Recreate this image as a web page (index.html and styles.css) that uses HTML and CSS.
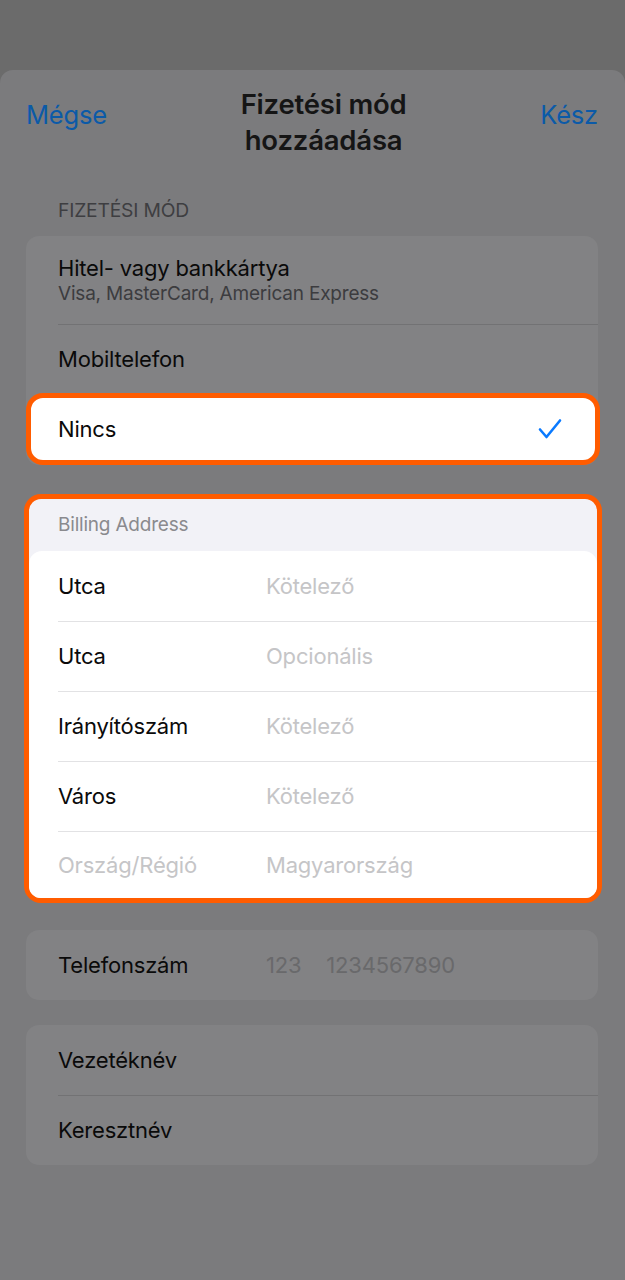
FILE: index.html
```html
<!DOCTYPE html>
<html lang="hu">
<head>
    <meta charset="utf-8">
    <title>Fizetési mód hozzáadása</title>
    <link rel="stylesheet" href="styles.css">
</head>

<body>

    <!-- modal sheet -->
    <div class="sheet">

        <div class="nav">
            <span class="nav-btn">Mégse</span>
            <h1 class="nav-title">Fizetési mód<br>hozzáadása</h1>
            <span class="nav-btn">Kész</span>
        </div>

        <!-- payment method -->
        <p class="section-label">FIZETÉSI MÓD</p>
        <div class="group">
            <div class="row row-tall">
                <span class="row-title">Hitel- vagy bankkártya</span>
                <span class="row-sub">Visa, MasterCard, American Express</span>
            </div>
            <div class="row">
                <span class="label">Mobiltelefon</span>
            </div>
            <div class="row highlight selected">
                <span class="label">Nincs</span>
                <svg class="check" width="24" height="22" viewBox="0 0 24 22">
                    <path d="M2 11.5 L8.5 19 L22 2.5" fill="none" stroke="#0a7aff" stroke-width="2.6" stroke-linecap="round" stroke-linejoin="round"/>
                </svg>
            </div>
        </div>

        <!-- billing address -->
        <div class="billing highlight">
            <p class="billing-label">Billing Address</p>
            <div class="billing-card">
                <div class="row">
                    <span class="label">Utca</span>
                    <span class="value">Kötelező</span>
                </div>
                <div class="row">
                    <span class="label">Utca</span>
                    <span class="value">Opcionális</span>
                </div>
                <div class="row">
                    <span class="label">Irányítószám</span>
                    <span class="value">Kötelező</span>
                </div>
                <div class="row">
                    <span class="label">Város</span>
                    <span class="value">Kötelező</span>
                </div>
                <div class="row row-last">
                    <span class="label muted">Ország/Régió</span>
                    <span class="value">Magyarország</span>
                </div>
            </div>
        </div>

        <!-- phone -->
        <div class="group">
            <div class="row">
                <span class="label">Telefonszám</span>
                <span class="value"><span class="code">123</span>1234567890</span>
            </div>
        </div>

        <!-- name -->
        <div class="group">
            <div class="row">
                <span class="label">Vezetéknév</span>
            </div>
            <div class="row">
                <span class="label">Keresztnév</span>
            </div>
        </div>

    </div>

</body>
</html>
```

FILE: styles.css
```css
* {
    margin: 0;
    padding: 0;
    box-sizing: border-box;
}

body {
    background: #6b6b6b;
    font-family: Inter, "Liberation Sans", sans-serif;
    color: #0a0a0a;
    letter-spacing: -0.2px;
}

        /* Sheet */

.sheet {
    margin-top: 70px;
    min-height: 1210px;
    background: #7b7b7d;
    border-radius: 13px 13px 0 0;
    padding: 0 27px 40px 26px;
}

.nav {
    display: flex;
    justify-content: space-between;
    align-items: flex-start;
    height: 126px;
}

.nav-btn {
    font-size: 25.5px;
    line-height: 30px;
    padding-top: 30px;
    color: #0b5aa8;
}

.nav-title {
    font-size: 27.5px;
    font-weight: 600;
    line-height: 36px;
    padding-top: 16px;
    text-align: center;
    color: #151515;
}

.section-label {
    font-size: 19.3px;
    color: #3e3e41;
    padding: 0 0 12px 32px;
    line-height: 28px;
}

        /* Groups */

.group {
    background: #828284;
    border-radius: 13px;
    margin-bottom: 25px;
}

.row {
    display: flex;
    align-items: center;
    height: 70px;
    padding: 0 0 0 32px;
    position: relative;
    font-size: 22px;
}

.row + .row::before {
    content: '';
    position: absolute;
    top: 0;
    left: 32px;
    right: 0;
    height: 1px;
    background: #727274;
}

.row-tall {
    height: 88px;
    flex-direction: column;
    align-items: flex-start;
    justify-content: center;
    gap: 0;
}

.row-title {
    font-size: 22px;
    line-height: 28px;
}

.row-sub {
    font-size: 19px;
    line-height: 24px;
    color: #3c3c3f;
}

.label {
    width: 208px;
    flex-shrink: 0;
}

.value {
    color: #69696b;
}

.code {
    margin-right: 25px;
}

        /* Highlighted parts */

.highlight {
    border: 5px solid #ff5c00;
    border-radius: 17px;
}

.row.selected {
    background: #fff;
    height: 72px;
    margin-top: -1px;
    padding: 0 33px 0 27px;
    margin-right: -2px;
    justify-content: space-between;
}

.row.selected::before {
    display: none;
}

.check {
    display: block;
}

.billing {
    background: #f2f2f7;
    margin: 29px -4px 27px -2px;
    overflow: hidden;
}

.billing-label {
    font-size: 19px;
    color: #8a8a8e;
    height: 52px;
    line-height: 52px;
    padding-left: 29px;
}

.billing-card {
    background: #fff;
    border-radius: 13px 13px 0 0;
}

.billing-card .row {
    padding-left: 29px;
}

.billing-card .row + .row::before {
    left: 29px;
    background: #e2e2e4;
}

.billing-card .value,
.billing-card .muted {
    color: #c5c5c7;
}

.row-last {
    height: 67px;
}
```
